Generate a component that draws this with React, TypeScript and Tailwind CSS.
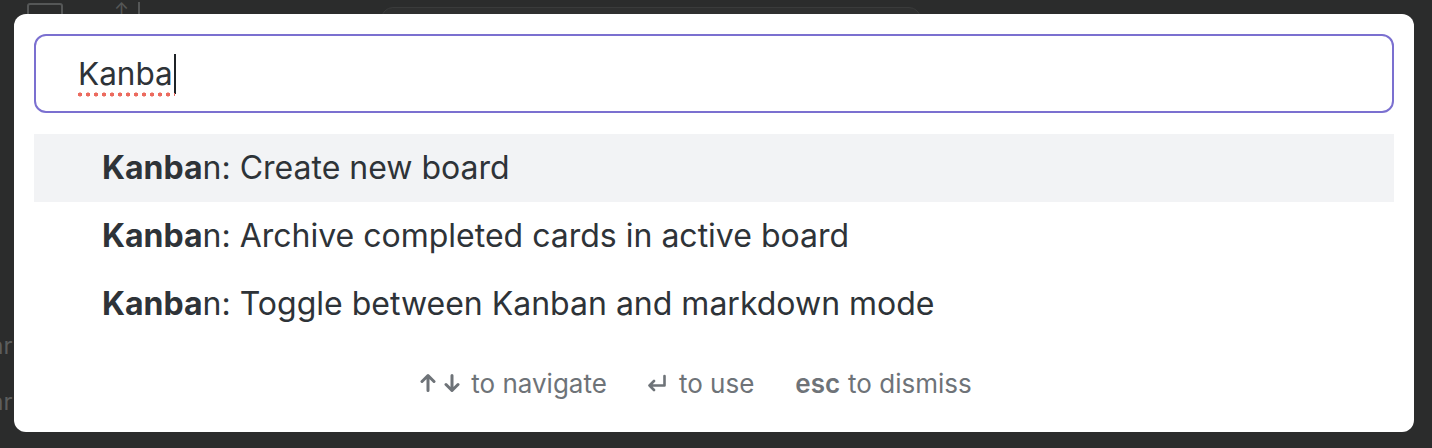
import React from "react";

const results = [
  { rest: "n: Create new board", active: true },
  { rest: "n: Archive completed cards in active board", active: false },
  { rest: "n: Toggle between Kanban and markdown mode", active: false },
];

function UpDown() {
  return (
    <svg width="40" height="20" viewBox="0 0 40 20" fill="none" stroke="currentColor" strokeWidth="3" strokeLinecap="round" strokeLinejoin="round">
      <path d="M8 17.5V2.5M2 8.5l6-6 6 6" />
      <path d="M32 2.5v15M26 11.5l6 6 6-6" />
    </svg>
  );
}

function Enter() {
  return (
    <svg width="18" height="18" viewBox="0 0 18 18" fill="none" stroke="currentColor" strokeWidth="2.6" strokeLinecap="round" strokeLinejoin="round">
      <path d="M16.5 2v9.5H1.5M6 7l-4.5 4.5L6 16" />
    </svg>
  );
}

export default function App() {
  return (
    <div className="relative h-[448px] w-[1432px] overflow-hidden bg-[#2b2c2c] font-['Inter',sans-serif]">
      {/* app chrome behind the prompt */}
      <div className="absolute left-[27px] top-[3px] h-[14px] w-[36px] rounded-[3px] border-2 border-[#555757]" />
      <div className="absolute left-[114px] top-[1px] text-[18px] leading-none text-[#555757]">↑</div>
      <div className="absolute left-[138px] top-[2px] h-[14px] w-[2px] bg-[#555757]" />
      <div className="absolute left-[381px] top-[7px] h-[30px] w-[540px] rounded-[12px] border border-[#3a3b3b] bg-[#2f3030]" />
      <div className="absolute left-[-10px] top-[328px] text-[24px] text-[#5b5d5d]">ar</div>
      <div className="absolute left-[-10px] top-[384px] text-[24px] text-[#5b5d5d]">ar</div>

      <div className="absolute left-[14px] top-[14px] flex h-[418px] w-[1400px] flex-col rounded-[12px] bg-white px-[20px] pt-[20px]">
        <div className="flex h-[79px] items-center rounded-[12px] border-2 border-[#7b70d0] pl-[42px]">
          <span className="relative text-[31.5px] leading-none text-[#2e3338]">
            Kanba
            <span className="absolute left-[-2px] right-[-2px] top-[calc(100%+3px)] h-[5px] bg-[radial-gradient(circle,#ec6a5e_1.8px,transparent_2.3px)] bg-[length:8px_5px] bg-repeat-x" />
          </span>
          <span className="ml-[1px] h-[40px] w-[2px] bg-[#1f2327]" />
        </div>

        <div className="mt-[21px] flex flex-col">
          {results.map((r, i) => (
            <div
              key={i}
              className={`flex h-[68px] items-center pl-[68px] text-[32px] text-[#2e3338] ${r.active ? "bg-[#f2f3f5]" : ""}`}
            >
              <span className="font-bold">Kanba</span>
              <span>{r.rest}</span>
            </div>
          ))}
        </div>

        <div className="flex flex-1 items-center justify-center gap-[41px] pb-[4px] pr-[36px] text-[26px] text-[#6e7378]">
          <div className="flex items-center gap-[11px]">
            <UpDown />
            <span>to navigate</span>
          </div>
          <div className="flex items-center gap-[13px]">
            <Enter />
            <span>to use</span>
          </div>
          <div className="flex items-center gap-[8px]">
            <span className="font-semibold">esc</span>
            <span>to dismiss</span>
          </div>
        </div>
      </div>
    </div>
  );
}
